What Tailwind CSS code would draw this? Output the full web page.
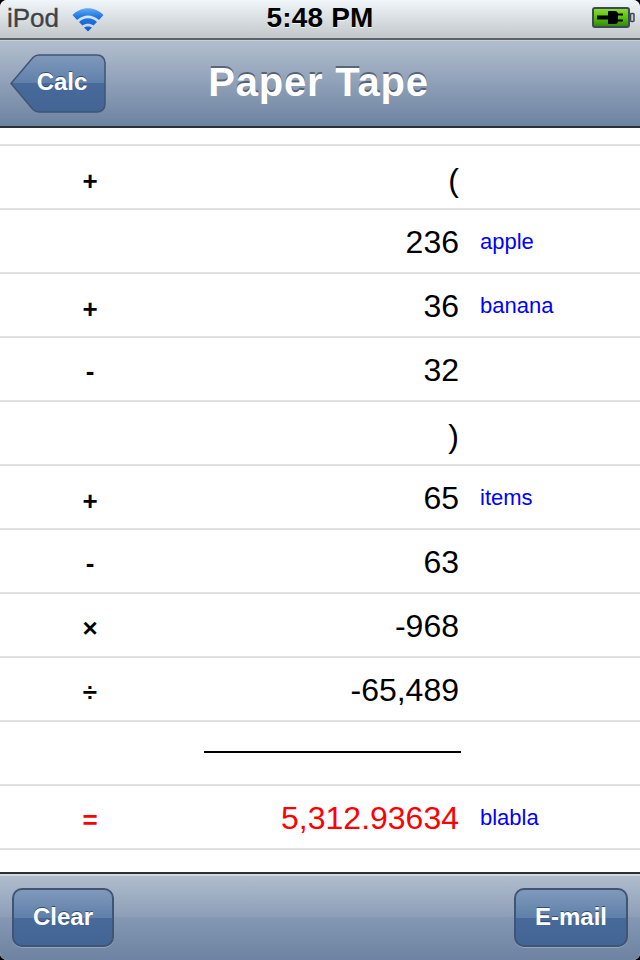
<!DOCTYPE html>
<html lang="en">
<head>
    <meta charset="UTF-8">
    <meta name="viewport" content="width=device-width, initial-scale=1.0">
    <title>Paper Tape</title>
    <script src="https://cdn.jsdelivr.net/npm/@tailwindcss/browser@4"></script>
</head>
<body class="bg-black font-['Liberation_Sans',Arial,sans-serif]">
    <div class="w-[640px] h-[960px] flex flex-col overflow-hidden rounded-[7px] bg-white">
        <!-- Status bar -->
        <div class="h-10 shrink-0 grid grid-cols-[1fr_auto_1fr] items-center pl-[7px] pr-[5px] pb-[3px] border-b-2 border-[#5f6368] bg-gradient-to-b from-[#f0f6f9] to-[#c2c8ca]">
            <div class="flex items-center gap-[13px]">
                <span class="text-[26px] leading-8 text-[#3f4245] [-webkit-text-stroke:0.4px_#3f4245] [text-shadow:0_1px_0_rgba(255,255,255,0.8)]">iPod</span>
                <svg width="32" height="26" viewBox="0 0 32 26" class="mt-[3px]">
                    <defs>
                        <linearGradient id="wifi" gradientUnits="userSpaceOnUse" x1="0" y1="1" x2="0" y2="25">
                            <stop offset="0" stop-color="#6fb2f2"/>
                            <stop offset="0.4" stop-color="#1f78e6"/>
                            <stop offset="1" stop-color="#0a5cdc"/>
                        </linearGradient>
                    </defs>
                    <path d="M0.5 9C9 0 23 0 31.5 9L27 14C20 8 12 8 5 14Z" fill="url(#wifi)"/>
                    <path d="M7 16C12 11 20 11 25 16L21.5 19.5C18.5 17 13.5 17 10.5 19.5Z" fill="url(#wifi)"/>
                    <path d="M12 21.5C14 20 18 20 20 21.5L16 25.5Z" fill="url(#wifi)"/>
                </svg>
            </div>
            <span class="text-[28px] leading-8 font-bold text-black tracking-[0.2px] mr-0.5 [text-shadow:0_1px_0_rgba(255,255,255,0.7)]">5:48 PM</span>
            <div class="flex justify-end">
                <svg width="44" height="24" viewBox="0 0 44 24">
                    <defs>
                        <linearGradient id="batt" x1="0" y1="0" x2="0" y2="1">
                            <stop offset="0" stop-color="#8fe030"/>
                            <stop offset="0.55" stop-color="#55bb10"/>
                            <stop offset="1" stop-color="#2c8405"/>
                        </linearGradient>
                    </defs>
                    <rect x="2" y="2" width="36" height="19" rx="2" fill="url(#batt)" stroke="#3c4a55" stroke-width="2"/>
                    <rect x="39.5" y="7.5" width="3.5" height="8" rx="1" fill="#c9ced2" stroke="#3c4a55" stroke-width="1.5"/>
                    <path d="M6 9.5H17V6C17 5.5 17.5 5 18 5H24C26 5 27 6.5 27 7.5H32V9.5H27V13.5H32V15.5H27C27 16.5 26 18 24 18H18C17.5 18 17 17.5 17 17V13.5H6Z" fill="#000"/>
                </svg>
            </div>
        </div>

        <!-- Nav bar -->
        <div class="h-[88px] shrink-0 relative grid grid-cols-[1fr_auto_1fr] items-center border-t border-[#c7d0da] border-b-2 border-b-[#2d3036] bg-gradient-to-b from-[#b2bece] to-[#6c83a1]">
            <div class="pl-[10px] pt-px">
                <div class="relative w-[96px] h-[60px] flex items-center justify-center pl-2 pb-1">
                    <svg class="absolute inset-0" width="96" height="60" viewBox="0 0 96 60">
                        <defs>
                            <linearGradient id="back" x1="0" y1="0" x2="0" y2="1">
                                <stop offset="0" stop-color="#8099bb"/>
                                <stop offset="0.5" stop-color="#5f80aa"/>
                                <stop offset="0.5" stop-color="#486a9a"/>
                                <stop offset="1" stop-color="#436596"/>
                            </linearGradient>
                        </defs>
                        <path d="M1 29.5L23 3.5C25 1.5 26.5 1 29 1H87C91.5 1 95 4 95 9V50C95 55 91.5 58 87 58H29C26.5 58 25 57.5 23 55.5Z" fill="url(#back)" stroke="#3f5573" stroke-width="1.5"/>
                    </svg>
                    <span class="relative text-2xl font-bold text-white [text-shadow:0_-1px_0_rgba(30,50,80,0.7)]">Calc</span>
                </div>
            </div>
            <h1 class="text-[40px] leading-none font-bold text-white tracking-[0.8px] pb-1 pr-[3px] [text-shadow:0_-2px_0_rgba(50,60,80,0.65)]">Paper Tape</h1>
        </div>

        <!-- Tape -->
        <div class="flex-1 pt-4 flex flex-col">
            <div class="h-0.5 bg-[#e0e0e0]"></div>
            <div class="h-16 flex border-b-2 border-[#e0e0e0]">
                <span class="w-[180px] text-center text-[26px] font-bold leading-[70px] text-black">+</span>
                <span class="w-[279px] text-right text-[32px] leading-[68px] text-black">(</span>
            </div>
            <div class="h-16 flex border-b-2 border-[#e0e0e0]">
                <span class="w-[180px]"></span>
                <span class="w-[279px] text-right text-[32px] leading-[64px] text-black">236</span>
                <span class="ml-[21px] text-[22px] leading-[64px] text-[#0000ff]">apple</span>
            </div>
            <div class="h-16 flex border-b-2 border-[#e0e0e0]">
                <span class="w-[180px] text-center text-[26px] font-bold leading-[70px] text-black">+</span>
                <span class="w-[279px] text-right text-[32px] leading-[64px] text-black">36</span>
                <span class="ml-[21px] text-[22px] leading-[64px] text-[#0000ff]">banana</span>
            </div>
            <div class="h-16 flex border-b-2 border-[#e0e0e0]">
                <span class="w-[180px] text-center text-[26px] font-bold leading-[66px] text-black">-</span>
                <span class="w-[279px] text-right text-[32px] leading-[64px] text-black">32</span>
            </div>
            <div class="h-16 flex border-b-2 border-[#e0e0e0]">
                <span class="w-[180px]"></span>
                <span class="w-[279px] text-right text-[32px] leading-[68px] text-black">)</span>
            </div>
            <div class="h-16 flex border-b-2 border-[#e0e0e0]">
                <span class="w-[180px] text-center text-[26px] font-bold leading-[70px] text-black">+</span>
                <span class="w-[279px] text-right text-[32px] leading-[64px] text-black">65</span>
                <span class="ml-[21px] text-[22px] leading-[64px] text-[#0000ff]">items</span>
            </div>
            <div class="h-16 flex border-b-2 border-[#e0e0e0]">
                <span class="w-[180px] text-center text-[26px] font-bold leading-[66px] text-black">-</span>
                <span class="w-[279px] text-right text-[32px] leading-[64px] text-black">63</span>
            </div>
            <div class="h-16 flex border-b-2 border-[#e0e0e0]">
                <span class="w-[180px] text-center text-[26px] font-bold leading-[68px] text-black">×</span>
                <span class="w-[279px] text-right text-[32px] leading-[64px] text-black">-968</span>
            </div>
            <div class="h-16 flex border-b-2 border-[#e0e0e0]">
                <span class="w-[180px] text-center text-[26px] font-bold leading-[68px] text-black">÷</span>
                <span class="w-[279px] text-right text-[32px] leading-[64px] text-black">-65,489</span>
            </div>
            <div class="h-16 flex border-b-2 border-[#e0e0e0]">
                <span class="w-[180px]"></span>
                <div class="w-[281px] flex justify-end pt-[29px]">
                    <div class="w-[257px] h-0.5 bg-black"></div>
                </div>
            </div>
            <div class="h-16 flex border-b-2 border-[#e0e0e0]">
                <span class="w-[180px] text-center text-[26px] font-bold leading-[68px] text-[#ff0000]">=</span>
                <span class="w-[279px] text-right text-[32px] leading-[64px] text-[#ff0000]">5,312.93634</span>
                <span class="ml-[21px] text-[22px] leading-[64px] text-[#0000ff]">blabla</span>
            </div>
        </div>

        <!-- Toolbar -->
        <div class="h-[88px] shrink-0 flex justify-between items-center pl-3 pr-3 border-t-2 border-[#2d3036] shadow-[inset_0_2px_0_#d0d8e0] bg-[linear-gradient(#b2bece,#8c9eb7_50%,#8498b3_50%,#6c83a1)]">
            <button class="w-[102px] h-[59px] rounded-[10px] border-2 border-[#3f5573] text-2xl font-bold text-white shadow-[0_1px_0_rgba(255,255,255,0.25)] [text-shadow:0_-1px_0_rgba(30,50,80,0.7)] bg-[linear-gradient(#8099bb,#5f80aa_50%,#486a9a_50%,#436596)]">Clear</button>
            <button class="w-[114px] h-[59px] rounded-[10px] border-2 border-[#3f5573] text-2xl font-bold text-white shadow-[0_1px_0_rgba(255,255,255,0.25)] [text-shadow:0_-1px_0_rgba(30,50,80,0.7)] bg-[linear-gradient(#8099bb,#5f80aa_50%,#486a9a_50%,#436596)]">E-mail</button>
        </div>
    </div>
</body>
</html>
